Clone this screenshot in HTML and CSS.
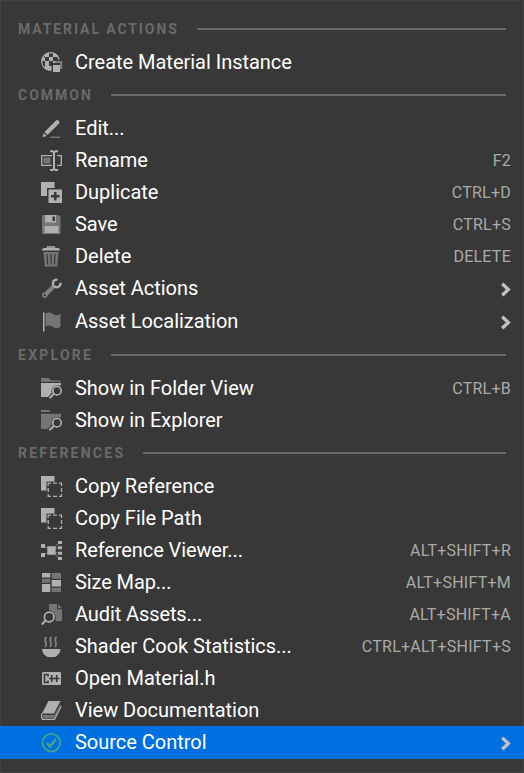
FILE: index.html
```html
<!DOCTYPE html>
<html lang="en">
<head>
<meta charset="utf-8">
<title>Context menu</title>
<link rel="stylesheet" href="styles.css">
</head>
<body>
<nav class="menu">
  <section>
    <h2 class="heading heading-tight"><span>MATERIAL ACTIONS</span></h2>
    <div class="item"><svg class="icon" viewBox="0 0 24 32"><circle cx="10.5" cy="15.5" r="8.8" fill="none" stroke="#b0b0b0" stroke-width="1.2"/><path class="b" d="M5 8.5L9 6.5V11H5ZM12.500 6.500Q17 7 18.500 11H13V7ZM9 11H13V15H9ZM2 12.500L5 11V15H9V20H5V15H2ZM13 15H18V17H13ZM9 20H12V24H9ZM5 20V23L9 24.500V20Z"/><path d="M11.500 17.500H15V13.500H23V26.500H11.500Z" fill="#383838"/><path class="sd" d="M16 17V16H21.200V22H20"/><path class="b" d="M13 19H20V26H13Z"/></svg><span class="label">Create Material Instance</span></div>
  </section>
  <section>
    <h2 class="heading"><span>COMMON</span></h2>
    <div class="item"><svg class="icon" viewBox="0 0 24 32"><path class="b" d="M4.500 20L16 8.500Q17.500 7.500 19 9Q20 10.500 19 11.500L7.500 23ZM3.800 21L6.600 24L2.500 25.300Z"/><path class="d" d="M11 24.500H20V26H9.500Z"/></svg><span class="label">Edit...</span></div>
    <div class="item"><svg class="icon" viewBox="0 0 24 32"><path class="d" d="M3.500 13.500H10.500V19.500H3.500Z"/><path class="sb thin" d="M12 11.700H1.700V21.300H12M17 11.700H21.300V21.300H17"/><path class="sb" d="M10 7.200H12.500L14 8.500L15.500 7.200H18M14 8V25M10 26H12.500L14 24.700L15.500 26H18"/></svg><span class="label">Rename</span><kbd>F2</kbd></div>
    <div class="item"><svg class="icon" viewBox="0 0 24 32"><path class="b" d="M1 6H14.500V12H7V20H1ZM8.500 13.500H22V27H8.500Z"/><path d="M15.300 16V24.500M11 20.300H19.600" stroke="#383838" stroke-width="2.500"/></svg><span class="label">Duplicate</span><kbd>CTRL+D</kbd></div>
    <div class="item"><svg class="icon" viewBox="0 0 24 32"><path class="d" d="M2 7H18.500L20.500 9V26H2Z"/><path class="b" d="M5 7H16V14.500H5ZM4.500 18H18.500V25H4.500Z"/><path d="M12.500 8.500H15V13H12.500Z" fill="#383838"/></svg><span class="label">Save</span><kbd>CTRL+S</kbd></div>
    <div class="item"><svg class="icon" viewBox="0 0 24 32"><path class="sb thin" d="M7.500 8.500V7H14.500V8.500"/><path class="b" d="M1.800 10.500Q2 8 4 8H18Q20 8 20.200 10.500Z"/><path class="d" d="M3.500 12H18.500L17.200 26.500H4.800Z"/><path d="M7 14L7.600 24.500M11 14V24.500M15 14L14.400 24.500" stroke="#383838" stroke-width="1.200"/></svg><span class="label">Delete</span><kbd>DELETE</kbd></div>
    <div class="item"><svg class="icon" viewBox="0 0 24 32"><path class="sd wide" d="M13.500 14.500L5 23"/><circle cx="4.700" cy="23.300" r="2" fill="#383838" stroke="#888" stroke-width="1.400"/><path d="M17.500 7.800C14 7 12.200 10 13 12.500C13.800 15.500 17.500 16.200 19.500 14Q20.800 12.500 20.500 10.800" fill="none" stroke="#b0b0b0" stroke-width="2.400"/></svg><span class="label">Asset Actions</span><svg class="chevron" viewBox="0 0 10 15"><path d="M1.200 1.800L7.300 7.500L1.200 13.200"/></svg></div>
    <div class="item item-last"><svg class="icon" viewBox="0 0 24 32"><path class="b" d="M3 7.500H4.500V26.500H3Z"/><path class="d" d="M5.500 8.500Q10 6.500 13 9Q16 11.500 20.500 9V22Q16 24.500 12.500 21.500Q9 19.500 5.500 21.500Z"/></svg><span class="label">Asset Localization</span><svg class="chevron" viewBox="0 0 10 15"><path d="M1.200 1.800L7.300 7.500L1.200 13.200"/></svg></div>
  </section>
  <section>
    <h2 class="heading heading-loose"><span>EXPLORE</span></h2>
    <div class="item"><svg class="icon" viewBox="0 0 24 32"><path class="d" d="M1 9V6H8.500L11 8.500H20Q21 8.500 21 9.700H1Z"/><path class="b" d="M1 11H21V13.500H18Q12 13 11.500 19V21L8 25H1Z"/><circle class="sb lens" cx="17" cy="18.700" r="4.200"/><path class="sb" d="M14 21.700L9.500 26.300"/></svg><span class="label">Show in Folder View</span><kbd>CTRL+B</kbd></div>
    <div class="item"><svg class="icon" viewBox="0 0 24 32"><path class="d" d="M1 8V6H8.500L11 8H1ZM1 9.700H21V13.500H18Q12 13 11.500 19V21L8 25H1Z"/><circle class="sb lens" cx="17" cy="18.700" r="4.200"/><path class="sb" d="M14 21.700L9.500 26.300"/></svg><span class="label">Show in Explorer</span></div>
  </section>
  <section>
    <h2 class="heading heading-loose"><span>REFERENCES</span></h2>
    <div class="item"><svg class="icon" viewBox="0 0 24 32"><path class="b" d="M1 6H14.500V11.500H6.500V20.500H1Z"/><path class="sb thin" d="M8.200 16V13.200H11M13 13.200H17M19 13.200H21.500V16M21.500 18V22M21.500 24V26.300H19M17 26.300H13M11 26.300H8.200V24M8.200 22V18"/></svg><span class="label">Copy Reference</span></div>
    <div class="item"><svg class="icon" viewBox="0 0 24 32"><path class="b" d="M1 6H14.500V11.500H6.500V20.500H1Z"/><path class="sb thin" d="M8.200 16V13.200H11M13 13.200H17M19 13.200H21.500V16M21.500 18V22M21.500 24V26.300H19M17 26.300H13M11 26.300H8.200V24M8.200 22V18"/></svg><span class="label">Copy File Path</span></div>
    <div class="item"><svg class="icon" viewBox="0 0 24 32"><path class="sd faint" d="M4 12L8 14.500M4 21L8 18.500M15 13L19 9M15 15L19 13.500M15 18L19 19.500M15 20L19 24"/><path class="b" d="M7.300 12.300H15.700V20.700H7.300ZM1 10H5V14H1ZM1 19H5V23H1ZM18 7H22V10H18ZM18 12.300H22V15.300H18ZM18 17.700H22V20.700H18ZM18 23H22V26H18Z"/></svg><span class="label label-snug">Reference Viewer...</span><kbd>ALT+SHIFT+R</kbd></div>
    <div class="item"><svg class="icon" viewBox="0 0 24 32"><path class="b" d="M2 7H10.300V11.500H2ZM2 18H10.300V26H2ZM11.700 14H21V20.500H11.700Z"/><path class="d" d="M2 12.700H10.300V16.700H2ZM11.700 7H21V12.700H11.700ZM11.700 21.700H21V26H11.700Z"/></svg><span class="label label-snug">Size Map...</span><kbd>ALT+SHIFT+M</kbd></div>
    <div class="item"><svg class="icon" viewBox="0 0 24 32"><path class="d" d="M9 12V6H17V11.500H22V23H15.500Q17 14 9 12ZM18 6L22 10.300H18Z"/><circle class="sb lens" cx="9.200" cy="19" r="4.800"/><path class="sb" d="M5.500 22.700L1.700 26.500"/></svg><span class="label label-snug">Audit Assets...</span><kbd>ALT+SHIFT+A</kbd></div>
    <div class="item"><svg class="icon" viewBox="0 0 24 32"><path class="sd steam" d="M6.500 7C2.500 10 8.500 13 5 17M11.500 7C7.500 10 13.500 13 10 17M16.500 7C12.500 10 18.500 13 15 17"/><path class="b" d="M2 19H20.500Q20 24.500 15 27H7.500Q2.500 24.500 2 19Z"/></svg><span class="label">Shader Cook Statistics...</span><kbd>CTRL+ALT+SHIFT+S</kbd></div>
    <div class="item"><svg class="icon" viewBox="0 0 24 32"><rect class="b" x="2" y="10" width="19" height="13" rx="1"/><path d="M8 14.500V12.500H4.500V20.500H8V18.500M9 16.500H14.500M11.700 13V20M14.500 16.500H19.500M16.700 13V20" fill="none" stroke="#383838" stroke-width="1.600"/></svg><span class="label">Open Material.h</span></div>
    <div class="item"><svg class="icon" viewBox="0 0 24 32"><path class="b" d="M8.500 7H20.500L14 19.500H2Z"/><path class="sb thin" d="M2.500 19Q0.500 22 2.500 25.300H14.500L21.300 12"/><path class="d" d="M3 21H14.500L20.500 10V12L14.500 24H3Z"/></svg><span class="label">View Documentation</span></div>
    <div class="item item-active"><svg class="icon" viewBox="0 0 24 32"><g fill="none" stroke="#4aa386"><circle cx="11.300" cy="16.600" r="8.800" stroke-width="1.700"/><path d="M6.700 17L10 20.500L16 13" stroke-width="2.300"/></g></svg><span class="label">Source Control</span><svg class="chevron" viewBox="0 0 10 15"><path d="M1.200 1.800L7.300 7.500L1.200 13.200"/></svg></div>
  </section>
</nav>
</body>
</html>
```
FILE: styles.css
```css
* { box-sizing: border-box; }

body {
  margin: 0;
  background: #383838;
  font-family: Roboto, sans-serif;
}

.menu {
  height: 773px;
  padding-top: 11px;
  border: 1px solid #424242;
  background: #383838;
}

.heading {
  display: flex;
  align-items: center;
  gap: 18px;
  height: 34px;
  margin: 0;
  padding: 0 17px;
  color: #6a6a6a;
  font-size: 14px;
  font-weight: 700;
  letter-spacing: 2px;
  line-height: 33px;
}

.heading-tight { letter-spacing: 1.9px; }
.heading-loose { letter-spacing: 2.25px; }

.heading span { transform: scaleY(1.1); }

.heading::after {
  content: "";
  flex: 1;
  height: 2px;
  background: #6a6a6a;
}

.item {
  display: flex;
  align-items: center;
  height: 32px;
  padding: 0 12px 0 39px;
  color: #fff;
  font-size: 20px;
  line-height: 32px;
  white-space: nowrap;
}

.label { letter-spacing: -0.02px; }
.label-snug { letter-spacing: -0.1px; }

.item-last { height: 34px; }

.item-active {
  height: 33px;
  margin: 0 -1px;
  padding: 0 13px 1px 40px;
  background: #0070e0;
}

.icon {
  flex: none;
  width: 24px;
  height: 32px;
  margin-right: 11px;
}

.b { fill: #b0b0b0; }
.d { fill: #757575; }
.sb, .sd { fill: none; stroke: #b0b0b0; stroke-width: 2; }
.sd { stroke: #808080; }
.thin { stroke-width: 1.3; }
.faint { stroke: #666; stroke-width: 1.2; }
.steam { stroke-width: 1.8; }
.wide { stroke-width: 4; }
.lens { stroke-width: 1.7; }

kbd {
  margin-left: auto;
  padding-top: 1px;
  color: #aaa;
  font-family: inherit;
  font-size: 16px;
  letter-spacing: 0.25px;
}

.chevron {
  width: 10px;
  height: 15px;
  margin: 2px 0 0 auto;
  fill: none;
  stroke: #c0c0c0;
  stroke-width: 3.4;
}
```
